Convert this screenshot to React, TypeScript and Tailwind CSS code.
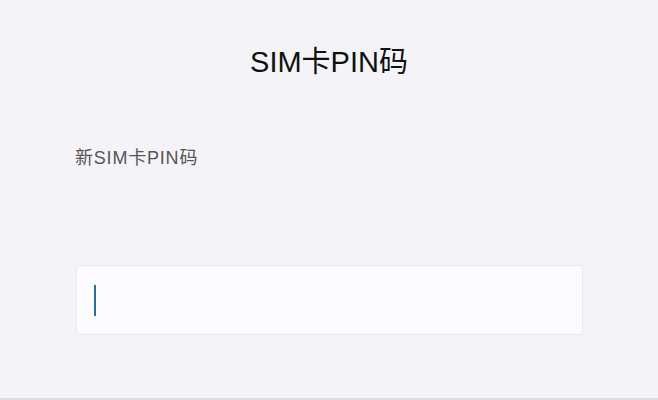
export default function App() {
  return (
    <div
      className="w-[658px] h-[400px] bg-[#f4f4f8] flex flex-col overflow-hidden"
      style={{ fontFamily: '"Liberation Sans", "Noto Sans CJK SC", sans-serif' }}
    >
      <div className="h-[398px] flex flex-col">
        <h1 className="mt-[44px] text-center text-[29px] leading-[36px] text-[#111]">SIM卡PIN码</h1>
        <div className="mt-[66px] pl-[75px] text-[18px] leading-[24px] tracking-[0.8px] text-[#555]">新SIM卡PIN码</div>
        <div className="mt-[95px] ml-[76px] w-[507px] h-[70px] bg-[#fbfbfd] border border-[#e8e8ee] rounded-[3px] flex items-center pl-[17px]">
          <div className="w-[2px] h-[31px] bg-[#2a6f8f]" />
        </div>
      </div>
      <div className="h-[2px] bg-[#dcdce2]" />
    </div>
  );
}
